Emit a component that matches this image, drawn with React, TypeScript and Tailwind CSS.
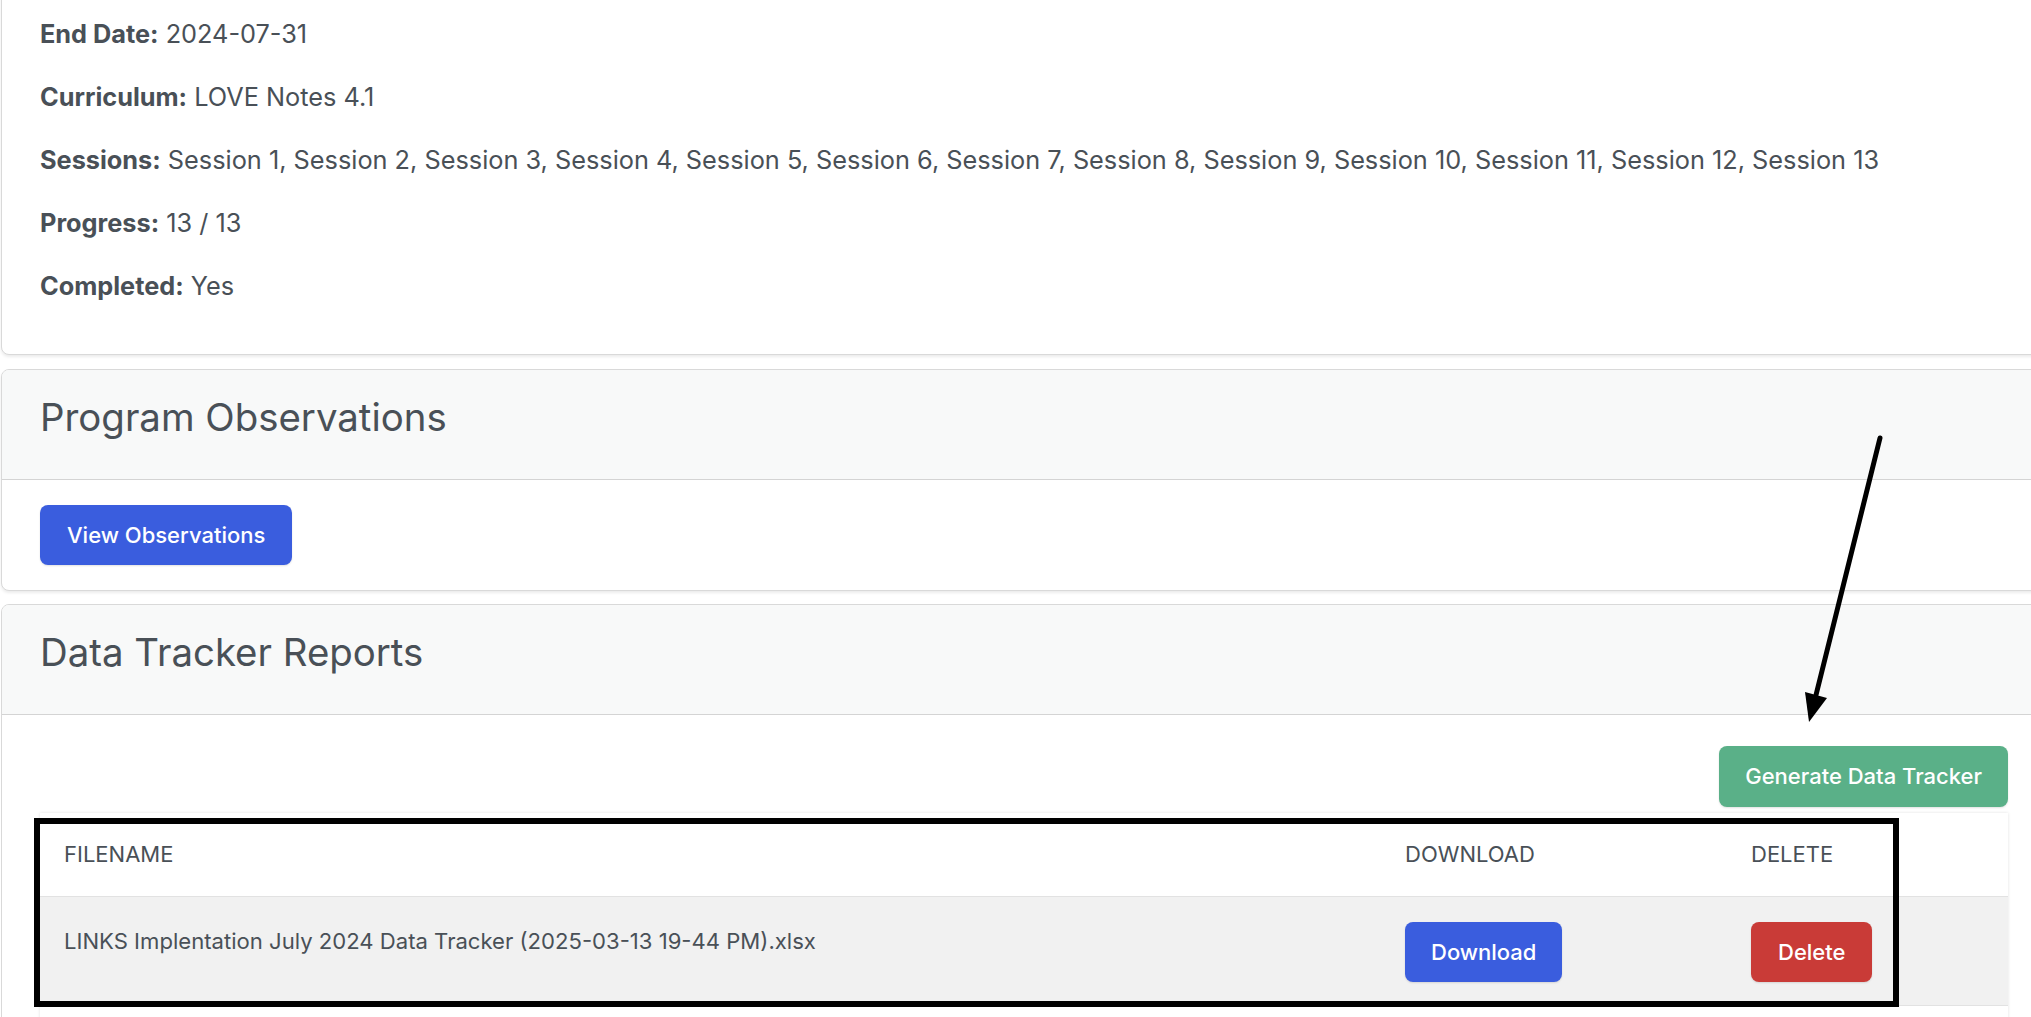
export default function App() {
  const rows: [string, string][] = [
    ["End Date:", "2024-07-31"],
    ["Curriculum:", "LOVE Notes 4.1"],
    [
      "Sessions:",
      "Session 1, Session 2, Session 3, Session 4, Session 5, Session 6, Session 7, Session 8, Session 9, Session 10, Session 11, Session 12, Session 13",
    ],
    ["Progress:", "13 / 13"],
    ["Completed:", "Yes"],
  ];
  return (
    <div className="relative w-[2031px] h-[1017px] overflow-hidden bg-white text-[#495057] font-[Inter,sans-serif]">
      <div className="flex flex-col w-[2046px] ml-[1px]">
        {/* Card 1 */}
        <div className="mt-[-12px] border border-[#d9d9d9] rounded-[8px] bg-white shadow-[0_2px_3px_rgba(0,0,0,0.08)] px-[38px] pt-[25px] pb-[25px]">
          {rows.map(([k, v]) => (
            <p key={k} className="text-[25.3px] leading-[39px] mb-[24px]">
              <span className="font-bold">{k}</span> {v}
            </p>
          ))}
        </div>

        {/* Card 2 */}
        <div className="mt-[14px] border border-[#d9d9d9] rounded-[8px] bg-white shadow-[0_2px_3px_rgba(0,0,0,0.08)] overflow-hidden">
          <div className="h-[110px] bg-[#f8f9f9] border-b border-[#d4d4d4] px-[38px] pt-[25px]">
            <h3 className="text-[38.4px] leading-[45px] font-normal">Program Observations</h3>
          </div>
          <div className="px-[38px] pt-[25px] pb-[25px]">
            <button className="h-[60px] px-[27px] rounded-[8px] bg-[#3a5dde] text-white text-[22px] font-medium shadow-[0_1px_2px_rgba(0,0,0,0.12)]">
              View Observations
            </button>
          </div>
        </div>

        {/* Card 3 */}
        <div className="mt-[13px] border border-[#d9d9d9] rounded-t-[8px] bg-white overflow-hidden">
          <div className="h-[110px] bg-[#f8f9f9] border-b border-[#d4d4d4] px-[38px] pt-[25px]">
            <h3 className="text-[38.4px] leading-[45px] font-normal">Data Tracker Reports</h3>
          </div>
          <div className="px-[38px] pt-[31px] pb-[40px]">
            <div className="flex justify-end">
              <button className="h-[61px] px-[26px] rounded-[8px] bg-[#5ab088] text-white text-[22px] font-medium shadow-[0_1px_2px_rgba(0,0,0,0.12)]">
                Generate Data Tracker
              </button>
            </div>
            <div className="mt-[6px] shadow-[0_0_3px_rgba(0,0,0,0.12)] bg-white">
              <div className="grid grid-cols-[1341px_346px_281px] h-[84px] border-b border-[#e2e2e2] text-[22px] bg-white">
                <div className="px-[24px] flex items-center">FILENAME</div>
                <div className="px-[24px] flex items-center">DOWNLOAD</div>
                <div className="px-[24px] flex items-center">DELETE</div>
              </div>
              <div className="grid grid-cols-[1341px_346px_281px] bg-[#f1f1f1] border-b border-[#e2e2e2]">
                <div className="px-[24px] pt-[26px] pb-[24px] text-[22.1px] leading-[36px]">
                  LINKS Implentation July 2024 Data Tracker (2025-03-13 19-44 PM).xlsx
                </div>
                <div className="px-[24px] pt-[25px] pb-[23px]">
                  <button className="h-[60px] px-[26px] rounded-[8px] bg-[#3a5dde] text-white text-[22px] font-medium shadow-[0_1px_2px_rgba(0,0,0,0.12)]">
                    Download
                  </button>
                </div>
                <div className="px-[24px] pt-[25px] pb-[23px]">
                  <button className="h-[60px] px-[27px] rounded-[8px] bg-[#c93b37] text-white text-[22px] font-medium shadow-[0_1px_2px_rgba(0,0,0,0.12)]">
                    Delete
                  </button>
                </div>
              </div>
              <div className="h-[40px]" />
            </div>
          </div>
        </div>
      </div>

      {/* Annotation rectangle */}
      <div className="absolute left-[34px] top-[818px] w-[1865px] h-[189px] border-[6px] border-black pointer-events-none" />

      {/* Annotation arrow */}
      <svg className="absolute left-0 top-0 pointer-events-none" width="2031" height="1017">
        <line x1="1880" y1="438" x2="1816" y2="695" stroke="#000" strokeWidth="5" strokeLinecap="round" />
        <polygon points="1809,722 1827,698 1805,692" fill="#000" />
      </svg>
    </div>
  );
}
